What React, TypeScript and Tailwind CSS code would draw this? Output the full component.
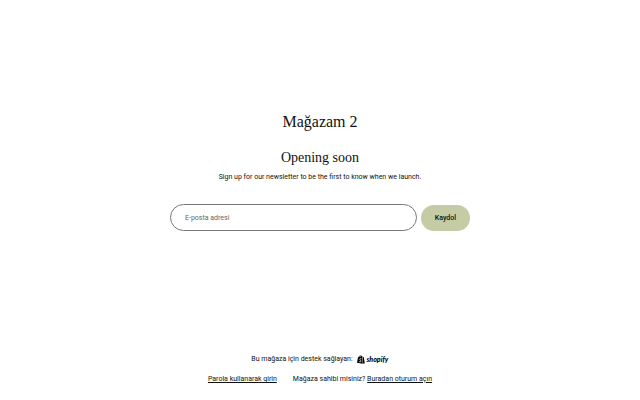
import React, { useState } from 'react';

const ShopifyLogo: React.FC = () => (
    <svg viewBox="0 0 64 18" className="w-8 h-[9px]" role="img" aria-label="Shopify">
        <path d="M2 4.5 10 2.2 11.5 17.5 0 15.5Z" fill="#000" />
        <path d="M11 2.8 13.5 4.4 15.6 16.4 12.2 17.5Z" fill="#000" />
        <path d="M4 4.5C4.4 1.8 6 .6 7.5.8 9 1 9.5 2.4 9.5 4.2" fill="none" stroke="#000" strokeWidth="1.2" />
        <path d="M8.8 7.4C6.8 6.5 5.3 7.4 5.5 8.8 5.8 10.4 8.2 10.5 8 12.3 7.8 14 5.5 13.8 4.2 12.8" fill="none" stroke="#fff" strokeWidth="1.6" />
        <text x="19" y="14" fontFamily="Lato, 'Liberation Sans', sans-serif" fontSize="14" fontWeight="900" fontStyle="italic">shopify</text>
    </svg>
);

const SignupForm: React.FC = () => {
    const [email, setEmail] = useState('');

    return (
        <form
            className="mt-[22px] w-full max-w-[300px] flex items-center gap-1"
            onSubmit={(e) => e.preventDefault()}
        >
            <input
                type="email"
                aria-label="E-posta adresi"
                placeholder="E-posta adresi"
                value={email}
                onChange={(e) => setEmail(e.target.value)}
                className="min-w-0 flex-1 h-[27px] px-[14px] rounded-full border border-[#777777] bg-white placeholder:text-[#666666] outline-none"
            />
            <button type="submit" className="h-[26px] px-[14px] rounded-full bg-[#c5cba5] text-[#111111] font-medium">
                Kaydol
            </button>
        </form>
    );
};

export default function App() {
    return (
        <div className="min-h-screen flex flex-col bg-white text-[#111111] font-[Roboto,'Liberation_Sans',sans-serif] text-[7px] leading-[10px]">
            <main className="flex-1 flex flex-col items-center px-4 pt-[112px] text-center">
                <h1 className="font-['Liberation_Serif',serif] text-[16px] leading-5">Mağazam 2</h1>
                <h2 className="mt-4 font-['Liberation_Serif',serif] text-[14px] leading-5">Opening soon</h2>
                <p className="mt-1">Sign up for our newsletter to be the first to know when we launch.</p>
                <SignupForm />
            </main>
            <footer className="flex flex-col items-center gap-[10px] px-4 pb-4">
                <div className="flex items-center gap-1">
                    <span>Bu mağaza için destek sağlayan:</span>
                    <a href="#shopify"><ShopifyLogo /></a>
                </div>
                <div className="flex flex-wrap justify-center gap-x-4">
                    <a href="#password" className="underline">Parola kullanarak girin</a>
                    <span>
                        Mağaza sahibi misiniz? <a href="#login" className="underline">Buradan oturum açın</a>
                    </span>
                </div>
            </footer>
        </div>
    );
}
